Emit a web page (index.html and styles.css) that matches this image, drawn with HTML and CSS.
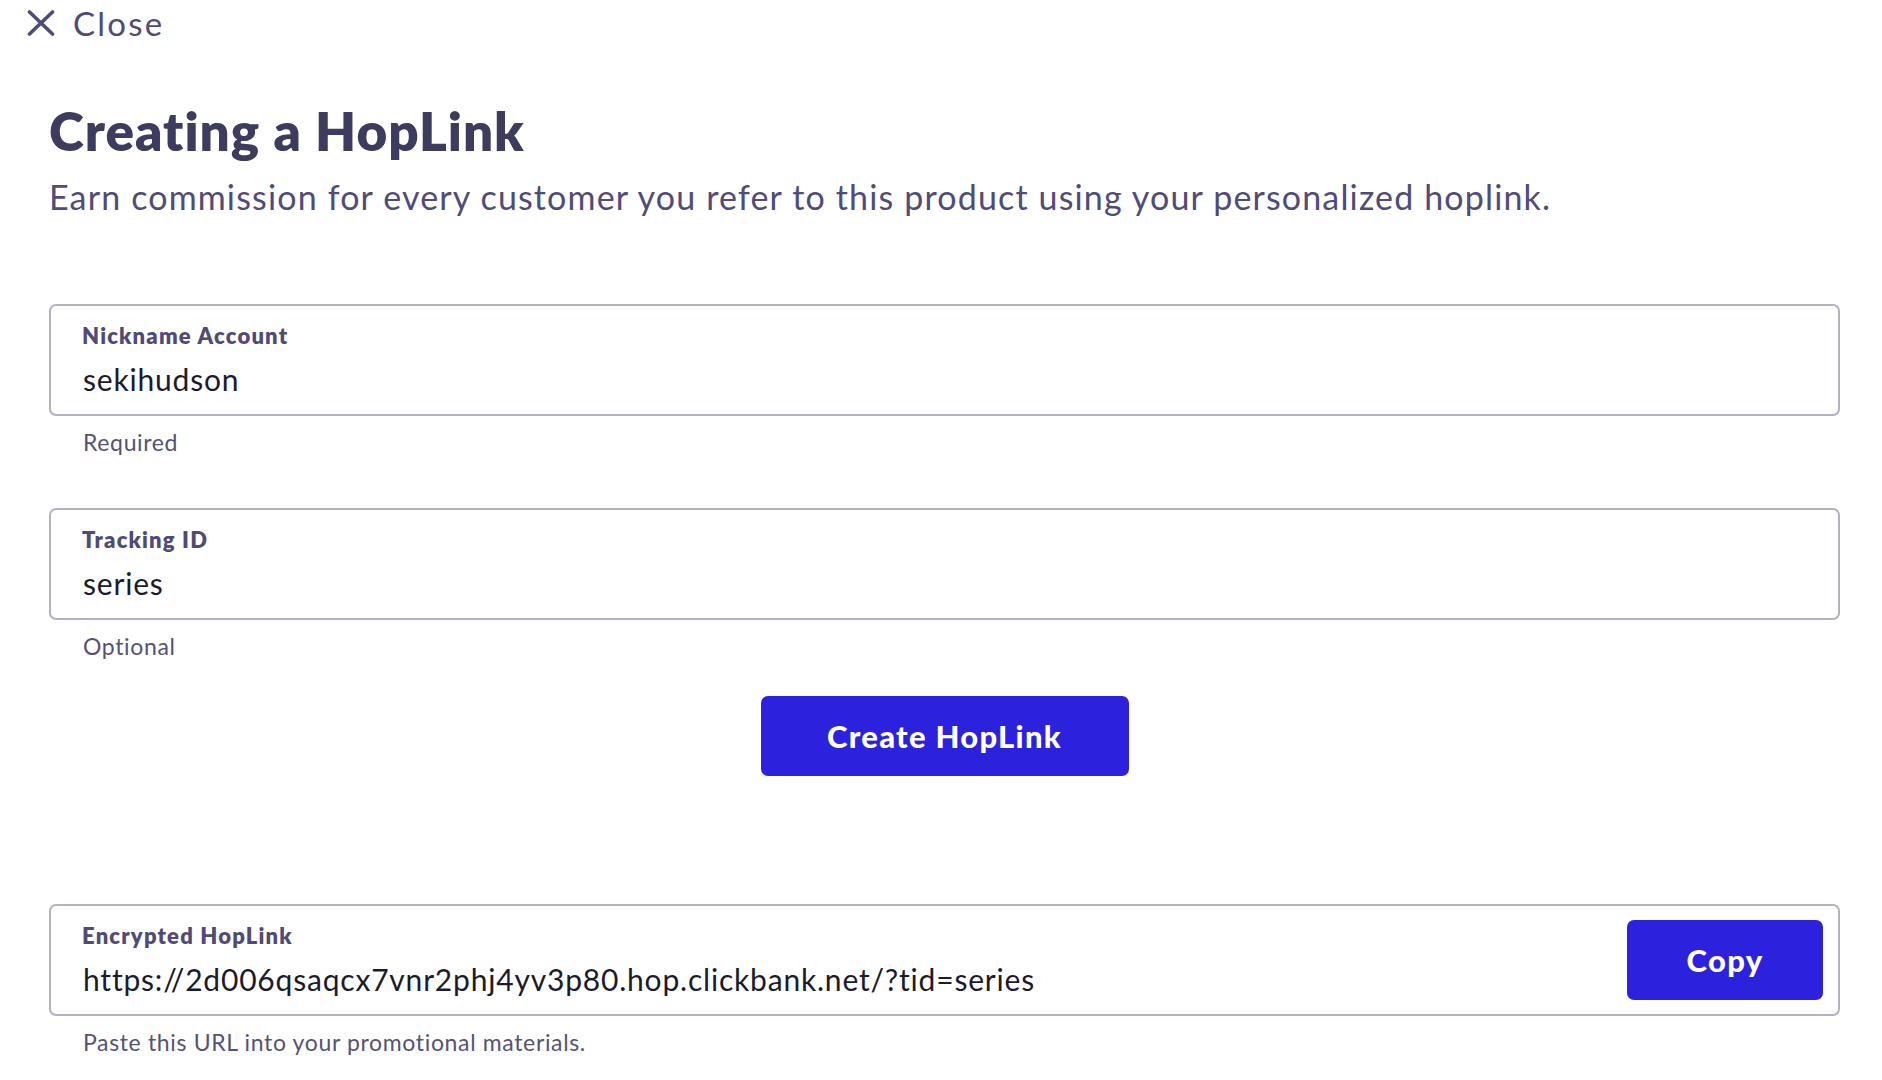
FILE: index.html
```html
<!DOCTYPE html>
<html lang="en">
<head>
<meta charset="utf-8">
<title>Creating a HopLink</title>
<link rel="stylesheet" href="styles.css">
</head>
<body>
<div class="page">
  <div class="topbar">
    <a class="close-link" href="#">
      <svg class="close-icon" width="28" height="26" viewBox="0 0 28 26" aria-hidden="true">
        <path d="M2.5 2 L25.5 24 M25.5 2 L2.5 24" stroke="currentColor" stroke-width="3.6" stroke-linecap="round" fill="none"/>
      </svg>
      <span>Close</span>
    </a>
  </div>

  <main class="content">
    <h1 class="title">Creating a HopLink</h1>
    <p class="lead">Earn commission for every customer you refer to this product using your personalized hoplink.</p>

    <div class="field">
      <div class="box">
        <div class="box-text">
          <div class="label">Nickname Account</div>
          <div class="value">sekihudson</div>
        </div>
      </div>
      <div class="help">Required</div>
    </div>

    <div class="field">
      <div class="box">
        <div class="box-text">
          <div class="label">Tracking ID</div>
          <div class="value">series</div>
        </div>
      </div>
      <div class="help">Optional</div>
    </div>

    <div class="actions">
      <button class="btn btn-create" type="button">Create HopLink</button>
    </div>

    <div class="field field-link">
      <div class="box box-link">
        <div class="box-text">
          <div class="label">Encrypted HopLink</div>
          <div class="value">https://2d006qsaqcx7vnr2phj4yv3p80.hop.clickbank.net/?tid=series</div>
        </div>
        <button class="btn btn-copy" type="button">Copy</button>
      </div>
      <div class="help">Paste this URL into your promotional materials.</div>
    </div>
  </main>
</div>
</body>
</html>
```

FILE: styles.css
```css
html, body {
  margin: 0;
  padding: 0;
  background: #ffffff;
}

body {
  font-family: Lato, "Open Sans", "Liberation Sans", sans-serif;
  color: #3d3b5c;
}

.page {
  width: 100%;
}

.topbar {
  display: flex;
  align-items: center;
  padding: 5px 0 0 27px;
}

.close-link {
  display: flex;
  align-items: center;
  gap: 18px;
  color: #4f4b7a;
  text-decoration: none;
  font-size: 33px;
  line-height: 36px;
  letter-spacing: 2.2px;
}

.close-icon {
  display: block;
  flex: none;
}

.content {
  padding: 0 42px 0 49px;
}

.title {
  margin: 60px 0 0;
  font-size: 53px;
  line-height: 60px;
  font-weight: 800;
  color: #3d3b5e;
  letter-spacing: 1px;
}

.lead {
  margin: 16px 0 0;
  font-size: 34px;
  line-height: 40px;
  color: #4f4b7a;
  letter-spacing: 1.15px;
}

.field {
  margin-top: 87px;
}

.field + .field {
  margin-top: 53px;
}

.box {
  display: flex;
  align-items: center;
  border: 2px solid #b3b1c1;
  border-radius: 7px;
  padding: 17px 31px 17px;
  background: #fff;
}

.box-text {
  flex: 1;
  min-width: 0;
}

.label {
  font-size: 22px;
  line-height: 26px;
  font-weight: 800;
  color: #4f4a78;
  margin-bottom: 12px;
  letter-spacing: 1.2px;
}

.value {
  font-size: 30px;
  line-height: 36px;
  color: #1b1a2e;
  padding-left: 1px;
  letter-spacing: 0.8px;
}

.help {
  margin-top: 13px;
  padding-left: 34px;
  font-size: 23px;
  line-height: 26px;
  color: #55527a;
  letter-spacing: 0.65px;
}

.actions {
  display: flex;
  justify-content: center;
  margin-top: 37px;
}

.btn {
  border: 0;
  border-radius: 7px;
  background: #2c22de;
  color: #ffffff;
  font-family: inherit;
  font-weight: 900;
  font-size: 31px;
  line-height: 36px;
  cursor: pointer;
  letter-spacing: 1.3px;
}

.btn-create {
  width: 368px;
  height: 80px;
}

.field-link {
  margin-top: 128px;
}

.box-link {
  padding-right: 15px;
}

.btn-copy {
  flex: none;
  width: 196px;
  height: 80px;
  margin: -14px 0 -14px 20px;
}
```
